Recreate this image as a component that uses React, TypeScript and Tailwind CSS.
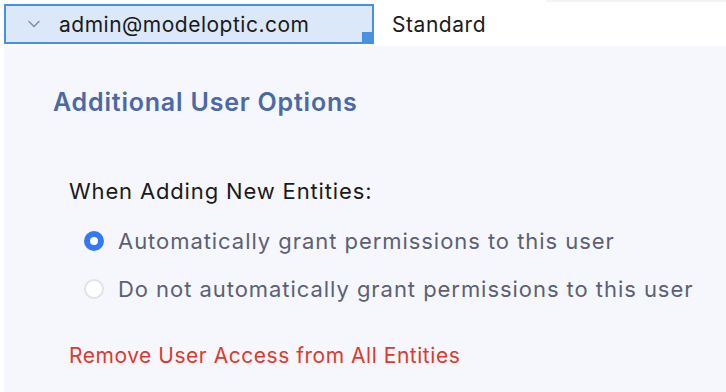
import React from "react";

export default function App() {
  const font = { fontFamily: 'Inter, "Noto Sans", sans-serif' };
  return (
    <div className="w-[726px] h-[392px] bg-white flex flex-col overflow-hidden" style={font}>
      <div className="flex h-[46px] shrink-0">
        <div className="pl-1 pt-1">
          <div className="relative w-[370px] h-[40px] border-2 border-[#4a90e2] bg-[#dbe8fa] flex items-center">
            <svg className="ml-[22px] w-[12px] h-[8px]" viewBox="0 0 12 8" fill="none">
              <path d="M1 1.5 L6 6.5 L11 1.5" stroke="#8a9099" strokeWidth="1.5" strokeLinecap="round" strokeLinejoin="round" />
            </svg>
            <span className="ml-[19px] text-[21px] tracking-[0.5px] text-[#1a1a1a] leading-none">admin@modeloptic.com</span>
            <div className="absolute right-0 bottom-0 w-[10px] h-[10px] bg-[#4a90e2]" />
          </div>
        </div>
        <div className="flex-1 flex flex-col">
          <div className="h-[2px] ml-[172px] bg-[#f4f4f4]" />
          <div className="flex-1 flex items-center pl-[18px]">
            <span className="text-[21px] tracking-[0.55px] text-[#1a1a1a] leading-none">Standard</span>
          </div>
        </div>
      </div>
      <div className="flex-1 ml-1 bg-[#f6f7fc] pl-[49px] pt-[41px]">
        <h2 className="h-[30px] flex items-center text-[25px] tracking-[0.8px] font-semibold text-[#4a69a6] leading-none">Additional User Options</h2>
        <div className="mt-[59px] pl-[16px]">
          <div className="h-[30px] flex items-center text-[22px] tracking-[0.85px] text-[#1a1a1a] leading-none">When Adding New Entities:</div>
          <div className="mt-[20px] pl-[15px] flex flex-col gap-[18px]">
            <label className="h-[30px] flex items-center gap-[14px]">
              <span className="w-[20px] h-[20px] shrink-0 rounded-full bg-[#3478f6] flex items-center justify-center">
                <span className="w-[8px] h-[8px] rounded-full bg-white" />
              </span>
              <span className="text-[22px] tracking-[0.95px] text-[#5b6172] leading-none whitespace-nowrap">Automatically grant permissions to this user</span>
            </label>
            <label className="h-[30px] flex items-center gap-[14px]">
              <span className="w-[20px] h-[20px] shrink-0 rounded-full bg-white border-2 border-[#e2e3e8]" />
              <span className="text-[22px] tracking-[0.95px] text-[#5b6172] leading-none whitespace-nowrap">Do not automatically grant permissions to this user</span>
            </label>
          </div>
          <div className="mt-[36px] h-[30px] flex items-center text-[21px] tracking-[0.53px] text-[#e0382d] leading-none whitespace-nowrap">Remove User Access from All Entities</div>
        </div>
      </div>
    </div>
  );
}
